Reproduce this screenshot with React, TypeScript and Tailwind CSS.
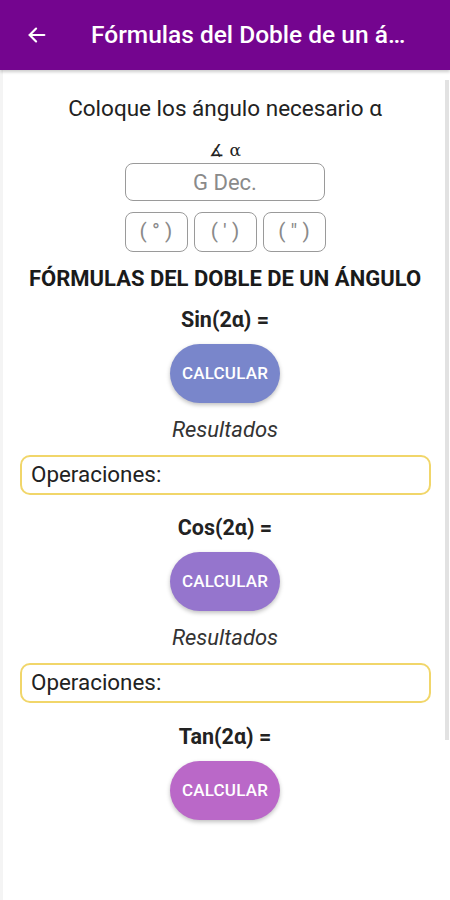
import React from "react";

function Arrow() {
  return (
    <svg width="22" height="22" viewBox="0 0 24 24" fill="none" stroke="white" strokeWidth="2.4" strokeLinecap="round" strokeLinejoin="round">
      <path d="M20 12H4" />
      <path d="M11 5l-7 7 7 7" />
    </svg>
  );
}

function Section({ label, color, last }: { label: string; color: string; last?: boolean }) {
  return (
    <div className="flex flex-col items-center">
      <div className="text-[21.5px] leading-[24px] font-bold text-[#222]">{label}</div>
      <button
        className={`mt-[12px] w-[110px] h-[59px] rounded-full text-white text-[17px] font-medium tracking-[0.2px] shadow-[0_2px_4px_rgba(0,0,0,0.25)] ${color}`}
      >
        CALCULAR
      </button>
      {!last && (
        <>
          <div className="mt-[14px] text-[22px] leading-[26px] italic text-[#333]">Resultados</div>
          <div className="mt-[12px] self-stretch ml-[20px] mr-[19px] h-[40px] rounded-[10px] border-2 border-[#f1d66a] flex items-center px-[9px] text-[22.4px] text-[#222]">
            Operaciones:
          </div>
        </>
      )}
    </div>
  );
}

export default function App() {
  return (
    <div className="relative w-[450px] h-[900px] bg-white overflow-hidden" style={{ fontFamily: "Roboto, 'Noto Sans', sans-serif" }}>
      <div className="h-[70px] bg-[#74058f] flex items-center shadow-[0_2px_3px_rgba(0,0,0,0.2)] relative z-10">
        <div className="pl-[26px] w-[91px] flex items-center">
          <Arrow />
        </div>
        <div className="text-white text-[24.5px] font-medium whitespace-nowrap">Fórmulas del Doble de un á…</div>
      </div>

      <div className="absolute left-0 top-[70px] w-[3px] h-[830px] bg-[#f4f4f4]" />
      <div className="absolute right-[1px] top-[80px] w-[4px] h-[660px] bg-[#e2e2e2]" />

      <div className="flex flex-col items-center">
        <div className="mt-[25px] text-[22.5px] leading-[26px] text-[#222]">Coloque los ángulo necesario α</div>
        <div className="mt-[19px] text-[17px] leading-[20px] text-[#222]" style={{ fontFamily: "'DejaVu Serif', serif" }}>∡ α</div>
        <div className="mt-[3px] w-[200px] h-[38px] rounded-[8px] border border-[#9a9a9a] flex items-center justify-center text-[22px] text-[#8a8a8a]">
          G Dec.
        </div>
        <div className="mt-[11px] flex gap-[6px]">
          {["( ° )", "( ' )", '( " )'].map((t) => (
            <div key={t} className="w-[63px] h-[40px] rounded-[8px] border border-[#9a9a9a] flex items-center justify-center text-[21px] text-[#8a8a8a]">
              {t}
            </div>
          ))}
        </div>
        <div className="mt-[14px] text-[22px] leading-[26px] font-bold text-[#1a1a1a] whitespace-nowrap">FÓRMULAS DEL DOBLE DE UN ÁNGULO</div>
      </div>

      <div className="mt-[16px]">
        <Section label="Sin(2α) =" color="bg-[#7986cb]" />
      </div>
      <div className="mt-[21px]">
        <Section label="Cos(2α) =" color="bg-[#9575cd]" />
      </div>
      <div className="mt-[22px]">
        <Section label="Tan(2α) =" color="bg-[#ba68c8]" last />
      </div>
    </div>
  );
}
